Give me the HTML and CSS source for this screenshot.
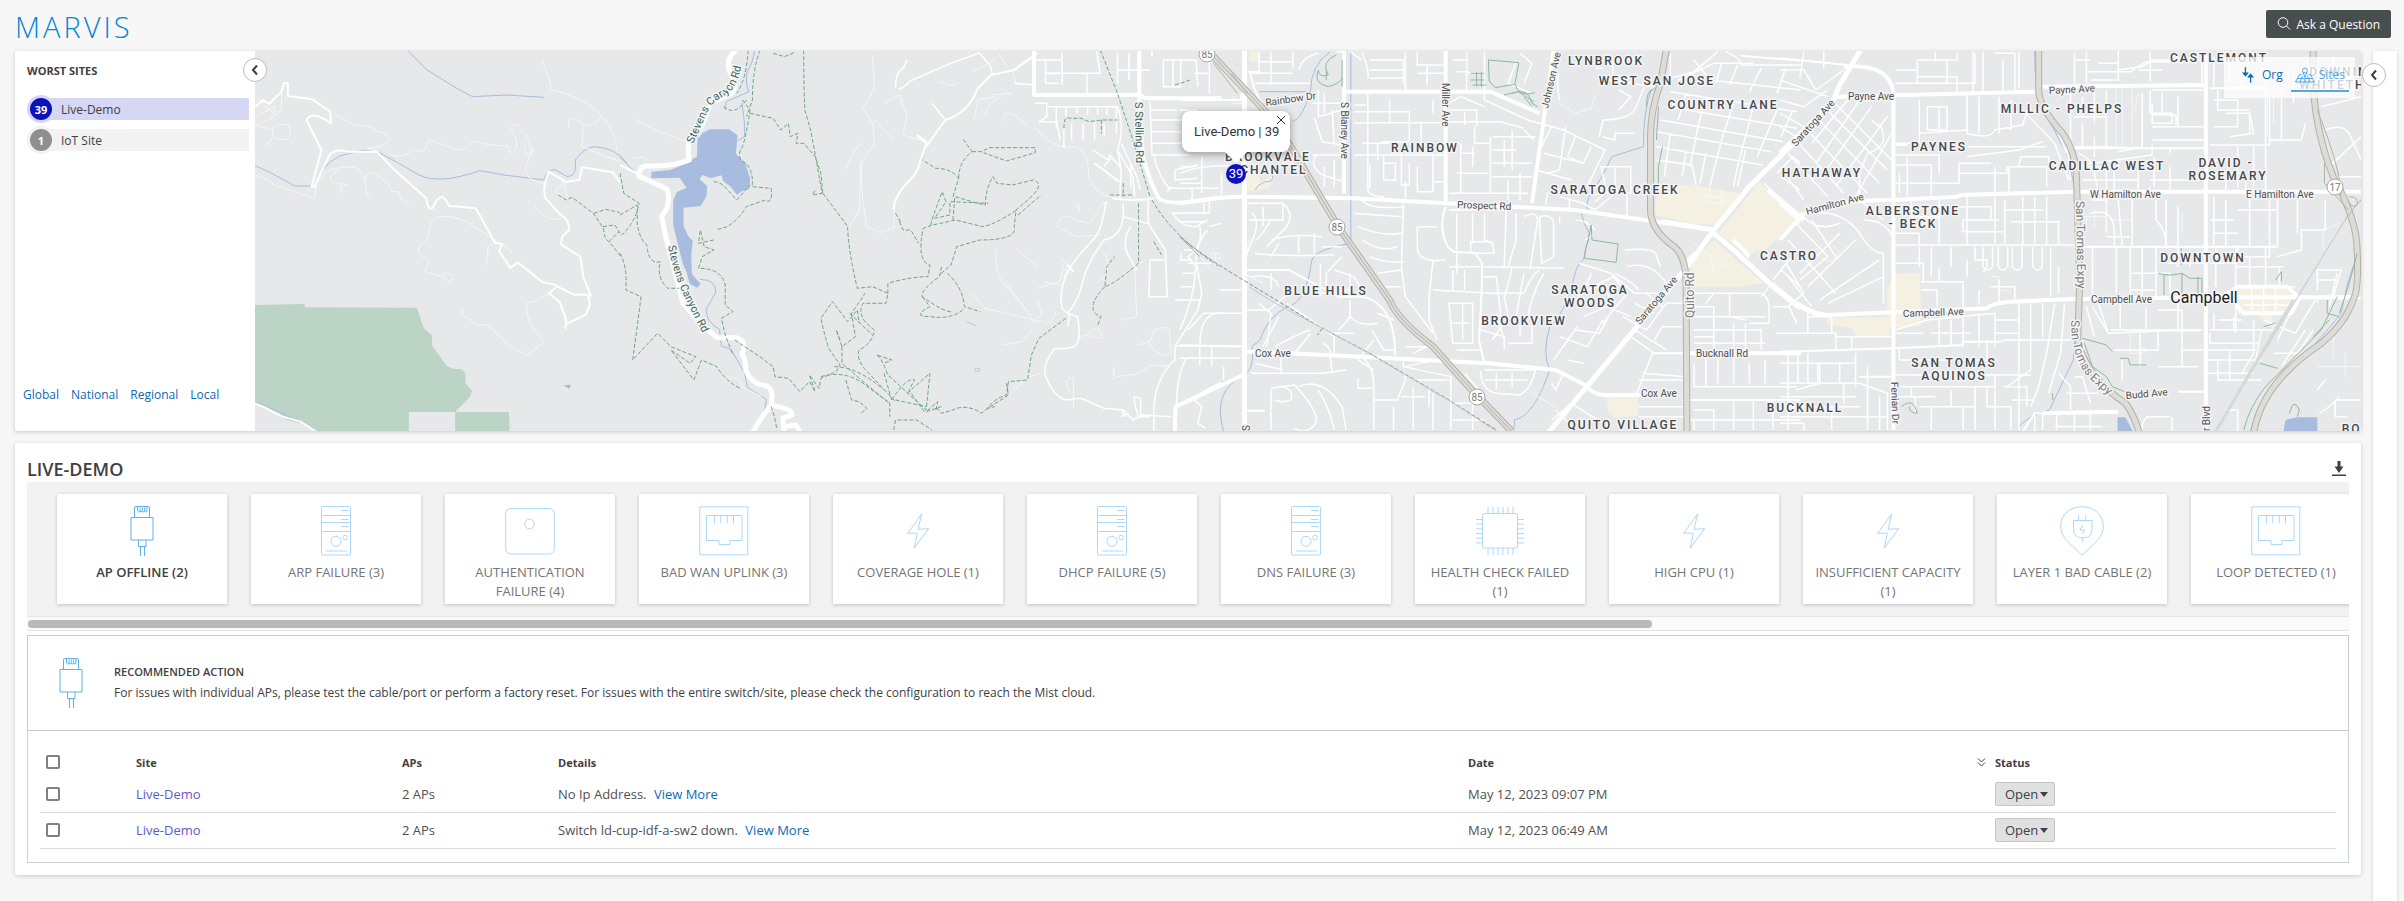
FILE: index.html
```html
<!DOCTYPE html>
<html lang="en">
<head>
    <meta charset="UTF-8">
    <meta name="viewport" content="width=device-width, initial-scale=1.0">
    <title>Marvis Actions</title>
    <link rel="stylesheet" href="styles.css">
</head>
<body>
    <!-- Shared icons -->
    <svg class="icon-defs" aria-hidden="true">
        <symbol id="icon-plug" viewBox="0 0 50 50">
            <path d="M14 11.5h22v22.5h-22zM17.5 11V2q0-1.500 1.500-1.500h12q1.500 0 1.500 1.500v9M20.500 1v4q1.300 2.500 2.500 0v-3.500M23 5q1.200 2.500 2.300 0V1.500M25.300 5q1.200 2.500 2.300 0V1.500M27.600 5q1.200 2.500 2.300 0V1M21.500 34v6.500h7.500V34M23.500 40.500V50M27.500 40.500V50"/>
        </symbol>
        <symbol id="icon-server" viewBox="0 0 50 50">
            <rect x="10.500" y=".5" width="29" height="48.500" rx="1"/>
            <path d="M10.500 9.500h29M10.500 16.500h29M10.500 25.500h29M30 4.500h7.500M30 13.500h7.500M30 20.500h7.500M15 45h21"/>
            <circle cx="25" cy="35.300" r="5"/>
            <circle cx="34" cy="31.500" r="2.300"/>
        </symbol>
        <symbol id="icon-ap" viewBox="0 0 50 50">
            <rect x=".7" y="2.500" width="48.600" height="45.500" rx="5"/>
            <circle cx="24.500" cy="18" r="4.800"/>
        </symbol>
        <symbol id="icon-port" viewBox="0 0 50 50">
            <path d="M.8.8h48v48H.8zM7.500 9.500h35.500v25H31v4H20v-4H7.500zM15.500 9.500v8M21.800 9.500v8M28.200 9.500v8M34.500 9.500v8"/>
        </symbol>
        <symbol id="icon-bolt" viewBox="0 0 50 50">
            <path d="M28.700 8L25 23.300l10.700-.6L21.300 42l3-15-9.600.3z"/>
        </symbol>
        <symbol id="icon-chip" viewBox="0 0 50 50">
            <rect x="7.500" y="7.500" width="35" height="34.500" rx="2"/>
            <path d="M13 1v6M18 1v6M23 1v6M28 1v6M33 1v6M38 1v6M13 42v7M18 42v7M23 42v7M28 42v7M33 42v7M38 42v7M1 13.500h6M1 18.200h6M1 22.900h6M1 27.500h6M1 32.200h6M1 36.900h6M43 13.500h6M43 18.200h6M43 22.900h6M43 27.500h6M43 32.200h6M43 36.900h6"/>
        </symbol>
        <symbol id="icon-cable" viewBox="0 0 50 50">
            <path d="M25 .7C13 .7 3.700 9 3.700 19.500 3.700 31 10 35 25 49 40 35 46.300 31 46.300 19.500 46.300 9 37 .7 25 .7zM16.500 14.500h18.500v8.500q0 9-9.200 9t-9.300-9zM21.700 9v5.500M28.700 9v5.500M25.700 32v4M25.500 19.500l-2.500 4.500h4.500l-2 4"/>
        </symbol>
        <symbol id="icon-chevron" viewBox="0 0 10 12">
            <path d="M7 1.500L3 6l4 4.500"/>
        </symbol>
    </svg>

    <header class="page-header">
        <h1>MARVIS</h1>
        <button type="button" class="ask-button">
            <svg viewBox="0 0 14 14" width="14" height="14"><circle cx="6" cy="5.500" r="4.800"/><path d="M9.500 9l3.500 3.500"/></svg>
            Ask a Question
        </button>
    </header>

    <div class="layout">
        <main class="content">
            <section class="panel site-panel">
                <aside class="worst-sites">
                    <h2>WORST SITES</h2>
                    <ul>
                        <li class="site selected"><span class="count">39</span>Live-Demo</li>
                        <li class="site"><span class="count">1</span>IoT Site</li>
                    </ul>
                    <nav class="zoom-links">
                        <a href="#">Global</a>
                        <a href="#">National</a>
                        <a href="#">Regional</a>
                        <a href="#">Local</a>
                    </nav>
                    <button type="button" class="collapse-button sidebar-toggle" aria-label="Collapse sites"><svg><use href="#icon-chevron"/></svg></button>
                </aside>

                <div class="map">
                    <svg class="map-canvas" viewBox="255 51 2106 380" preserveAspectRatio="xMidYMid slice">
                        <!-- West hills -->
                        <g transform="scale(.3954 .3333)">
                            <path class="park" d="M640 915L770 912l1 10 283 1 18 62 20 20 1 32 37 61 18 9h19l10 13v30l17 22-6 20-37 44h136l2 60h-138v-60h-117v60H798l-33-25-37-10-28-20-60-43z"/>
                            <path class="creek" d="M1030 150l50 60 75 55 40 25 85-5 95 7M640 495q40 18 105 63h45M805 532q25-62 85-74 30-13 65-3 55 35 105 70 50 30 153-13l62 13 100 15q10-35 30-30l30 20q25 0 20-50 25-40 50-40 55 5 80 50M645 1205l60 30 40 25"/>
                            <path class="water" d="M1424 1156l20-2-4 12z"/>
                            <path class="road thin" d="M712 280v50l-30 30 15-40-45 25M655 300l40 45M645 380l30-20M645 375l45 15v25l-20 25M690 390q0-25 40-15 10 20-5 45l-30-5M845 340l50 35q50 0 60 20 20 0 30 20-10 30-60 30l30 10M985 460q15 15 40 5l20-15 25 5 15-35 50 20q20 15 45 5 15-30 35-15l70 10q5 30 15 15 15-30-5-60-5-30 20-20M1315 388q25 20 25 50 20 20-5 22-15 0-5-22M1345 445q-5 30-15 55-5 40 40 48l15 5M1370 180q20 50 25 90 80 20 120 70 45 50 45 110M1440 385q-10-30 15-30l25 22 25-5 15-25M1475 380l-3 60q60 30 96 45M645 525q30 10 50 30l60 25 40 15 5-40M805 545q20-40 50-40 50-15 60 15 10 20 12 60l15 8M922 540q5-30 25-20l35 30 10 25 15 0 10 25 20 10M855 510q-30 25-15 35l40 10M860 550l5 30M1260 730q-40-35-80-65-40-20-75-15-20 10-22 65-50 40 2 65l-10 35 42 15q10-20 30 0l-7 18-23-18M1235 740l-5 55M1240 735l25-8 30 30M1388 880l-38 25-18 5q-2 40 18 80 30 30 22 40l-39 36-43-26-55-65h-35l-10-15-22-15v-18M1352 618q10 30 50 40h20M1425 550l-20 20 15 20M1425 545l10 50"/>
                            <path class="road mid" d="M640 325l25-25 15 12 32-37 6-25h10v38l62 10 45 37 3 35q-50-40-63-10l38 90-25 110h7l38-95q15-20 45-10h75l45 55 80 85q5 40 17 28 20-60 40-6l68 8 17 35 32 68 18 5-8 20 28 50 20-15 62 58 30 8q30 20 50 30h35l5 30-10 30-50 28-2-18M1495 890l-20-60-7-60-48-35q-5-25 20-45-2-35-22-45l-38-50q-10-30 8-80l42 30 35-5 7-38 78 15 18 30M1410 858l-22 22 27 25 17 55-2 27M640 1210l25 10 50 30 45 15 50 38"/>
                            <path class="trail" d="M1412 585l20 15 15-8 55 50 25 45q0 30 15 40l30 45M1502 640l30-12 36 10M1525 680l30-5 13 25M1540 725l25-30"/>
                        </g>

                        <!-- Stevens Creek -->
                        <g transform="translate(620 40) scale(.3827 .3333)">
                            <path class="water" d="M205 340q-5-40 10-60l20-12h50l22 18-4 55 25 30 12 45-2 30-20 8-12 10-18-25-18-15-5-18-28 9-22-10-7 13 20 20-2 30-15 30-45 5v55l12 30 12 15-4 45 2 55 22 28-8 12-20-12-8-35-10-25-25-115v-75l10-25 25-13-18-30-75 2 2-20 48-5 22-10 48-30 2-60 10 5z"/>
                            <path class="creek" d="M352 30q-5 40-20 65-5 40 5 60l-60 30-2 25M318 190q10 60 7 100l-18 12M0 350l42 50M208 718q45 0 42 40l-25 50q0 40 35 60l5 50 25 10 35 70 8 45 50 35-10 60"/>
                            <path class="road thin" d="M35 238l70 38 70 30M38 355q30-10 30 10M660 45l5 100-30 60 25 45 5 60-35 60-5 140-30 60M590 390q25-70 40-80M665 240l50 60M690 190l40-25 20 60-10 60 45 15M630 360q0 70 5 130l10 70 35 18 35-15 2-50M835 125q40 20 45 5M920 95l60-35M970 165l55-5M925 240l10-60 45-10M950 230l20-40 30-25M1008 250q-20-50 30-20l25 25M990 40l20 40M1085 40l-60 50 10 40 50 5M1085 260q40 70 100 60 40 5 40 90 20 60 60 60M985 630q-10 40 10 90l60 80 30 50M1010 730l50 80M1090 745l60-20 10-50M1040 630l50 50M950 805l60 15 90 25M920 760l35 45M1150 655l20 20-15 60-50-10M1190 540q-40-30-45 20l45 30 65-5M1190 540l35 10M1200 510q-20-25 0-15v20M1230 550l30-60h15M1000 915l50-10 30-40M1075 850q30-20 25-40l-10-30M1105 840q20 30 35-30M1200 890l20-5q30-40 40 0 0 20-40 0M1310 840l40-10-5-150 30-20M1350 915q30-5 40-20 0-40 45-30l5 80-20 0q-50-20-30-60M1290 1020v-40M1295 1010l60-8 30-25 50 0M1175 1060q-20-50 10-45v60l0 30M1270 640q10 60-10 80M1030 1050l40-40 30-10M275 1020q40-20 45 20l50 30"/>
                            <path class="road" d="M720 145q0-50 20-60l10-25M728 148q20-10 30-25l110-55 50-20 20-10 30 40 5 25M775 285l28 20M850 240l-35-50M1085 135l-55-5M1155 40v95M1085 60h70M1112 60v70h35M1155 100h65v60M1245 30l10 70M1255 100h-35M1300 40v90M1300 90h55M1330 40v80M1355 90h30M1390 30v20M1420 140V60h45v80zM1445 60v80M1465 60h40l5 80M1500 100h35M1540 50v110M1085 190h30v40l-20 15h50M1117 200h180v80M1140 200v60M1165 200v30M1195 200v20M1222 205v20M1248 205v20M1272 205v20M1180 250v50M1210 250v50M1240 245v55M1265 250v40M1160 265v60M1140 240l10 60M1300 200q20 60 0 130l10 60-5 90M1235 330l40 30 5-15 30 40M1285 350l-20 30M1310 310l40 100 10 40M1300 330l40 80 5 60M1335 370v70M1385 185l5 160M1385 210h70M1390 240h90M1390 275h80M1390 310h90M1390 345h100M1395 345q10 60 40 100h130M1450 390l60-15M1450 390v30l60-5M1495 445v40M1440 520h100v-40M1445 520q20 40 60 40l30-20M1540 560l30-10M1535 570q-30 40-30 90l15 100-10 50-60 110v40q-60 60-55 180v40M1380 480v70l45 80 5 140h-48l3-110h40M1450 780h65M1465 640v20h30M1470 700h30M1465 740h35M1450 918h120M1515 918q0-100 55-100M1515 918v60M1560 955h-80q-30 60-25 170M1500 1080l20 20-10 50 20 15M1385 1130l-30 0q-15-50-10-60l15 5v60M1270 485q-10 80-30 110-50 60-65 90-30 60-20 120l20 20-5 35M1315 490v40q-5 60-50 70-40 60-55 120-10 60-40 100l25 10q10 50 0 80-10 20-60 15-30 50-25 75 20 70 55 80l40-5 60 30 50 5 25 30 25-15 75 5M1315 530l60 20h10M1335 560q-30 50 0 100l15 30M1440 440l-10 15M1320 1130l-10-20M1310 1130l20-10"/>
                            <path class="road major" d="M1082 30v135h275V30M1357 163l15 12h200M1357 163q0 60 10 190 20 80 40 120 20 30 160 0M1450 1180q0-60 2-80 60-30 120-70"/>
                            <path class="road wide" d="M303 30q-30 30-15 70 20 30 5 60l-55 30-25 70-32 40q-5 30 0 60-40 20-110 18-20 0-22 30l75 40q10 50-15 80l10 60 45 200q40 60 90 105h50q30 10 15 50 10 10 10 50 15 40 55 45 20 10 10 60-30 40-50 85M390 1095q60 10 60 30l-25 10 5 45M430 1160l30-5 10 20"/>
                            <path class="road mid" d="M775 285l25 25-15 50q-5 40-40 75-30 40-30 75M800 320l50-80q60-20 85-95l35-40 60-15 60-50M1240 370l65 55M1285 475q60 10 110 0M0 375l50 28M1185 695l-15-20M1110 100h40"/>
                            <path class="trail" d="M335 30q-5 90-30 130M366 30q-20 60-20 150l-15 50M270 200q30 30 60-20M320 180l20 30q-15 110-25 120-10 30 15 40 20 30 15 70l50 5q5 50-15 35l-50 20q-20 40-50 60l-30 10M340 220l60 15 20 35 20-20 5 40 20-10-5 30 20 0 30 40 15 50 5 60M480 30q0 100 3 180l15 60 10 60 20 130-25 5 10-20M530 460q40 60 65 100 0 60 25 185l40-5 40 20-5 30-60 0q-20 40 30 80-5 40-40 60-10 30 25 70l70 85M245 425q20 0 40 30l20 25 35-45M245 600l-40 10 5-40 10 50 25 10-30 20-10 35q60 0 70 50v60l20 20-30 20 10 50 20 60M400 40l30 10 25-12M0 400l10 60 40 30q-10 60-50 100M0 525l45-30v60q10 50 25 60 5 60 35 50-10 50 20 80h30M0 640q20 40 15 110l40 20-10 90-12 100 65-80 35 40 65 30-15 20-50-40 60 90 20-60 40 20q20 40 60 65M300 900l65 50 35 30 5 30 35 5 30 40 25-30 15 30-15-50 25 40 5-30 40-20 10-20-30-50q-15-60-20-90l30-50 40 60 25-35 5 40M575 900l-10-30 15 50 35-30-10-70 30-50 5-10M600 820l60 65M395 1100q10 30 15 70M525 1010q60-20 110 20l70 60M560 980q60 0 130 70M580 920v50q80 80 125 120v40M590 1020l15 60 20 5 20 20-15 15M715 1170l5-30 55 0 40 30M710 1080q40-70 60-60l-15 30 40 65M720 1080l80 20M750 1060l60-60-10 110-100-105q-20-60-30-60l40 15-20 10M690 1000l20 80M840 1100l-40 15 30-30-5 30M700 760v-30q60-20 105-20l5-35q-35-10-18-110l25-10 60-15 70 20q30-5 90-50M812 555q0-10 30-100l10 30-30 50 40-10v-40l100 5M870 540l5-70 60 20 20 5q0-50 20-85l10 20 40 5 55-15q30 10-5 50l-40 40-5 50q10 40-90 40l-60 20-15 55-30 30M870 470l15-55q-20-30-60-30l-35-25M885 415q0-50 35-80l-25-40M920 335l25 0 20-12h120v15l-75 25-60-25M730 545l10 25 20 0 20 40M720 520l15 30M1040 525l60-60M840 680l-5 30q-50 40-45 60 60 50 80 45M855 700q40 40 45 100l40 15M790 770l20 30q-50 30 0 30 60 10 90-25M1165 835l-70 60-20 50-10 75-50 5-5 40q-30 10-50 40l20-5M1160 265q0-40 15-30l30 0 20 10 35-5 40 0M1258 240v40M1255 30l45 130 40 140 45 170M1280 465l60 0M1315 430v40M1390 480q40 80 115 150l60 50M1355 490v180q-60 60-88 70l5-60 20-30M1267 740q-50 60-20 85l10 5-10 30M1395 605l20 40M1450 135l40-15"/>
                            <path class="trail dark" d="M1010 1030l5 35-60 45-10 10q-40-30-75-10l-30 10-15-20"/>
                            <path class="rail" d="M905 845l25 12M928 985h12v8h-12z"/>
                        </g>

                        <!-- Cupertino to Saratoga -->
                        <g transform="translate(1180 40) scale(.3954 .3333)">
                            <path class="downtown" d="M1210 438l90-3 115 25 5 25-68 70-60-5-92-25zM1466 425l95 105-75 95q-40 20-55 15l-70-60zM1350 600l125 130-60 10h-122v-70zM1078 1070l80-2v60l-60 5-15-15zM175 35h22v30h-22zM170 350l15 15 20 60 30-20-10 40-55 10z"/>
                            <path class="creek" d="M380 35q-50 40-50 120h-130M330 155q-20 80-45 90M432 30v580q-100 20-100 60-15 120-60 130-50 30-70 100l-20 20q10 80-40 100-60 50-30 160M235 405q0 25-20 20-20 10-25 25M1222 40q5 100-30 110-20 60-20 170l-80 30q-30 80-50 100-20 50-10 60M1015 520q5 30 20 60l-15 80q-20 10-30 90-30 90-55 110-20 80 0 130-40 140-90 150 10 30-30 50"/>
                            <path class="road thin" d="M165 190l-30 0v-20M80 640h20v15h-20zM50 650l30 40M90 640v40M160 700l50 30M170 650q0-50 10-60M960 190l40 30 40-15 10-40M1310 455l90 35M1320 470h60M1330 490h50M1340 440v50M1370 450v60M1300 610l90 80M1320 690l80-20M1340 640l10 60M890 1060l60 40"/>
                            <path class="road" d="M0 210h45M0 240h50M0 275h50M0 310h40M0 380h40M0 400q60-30 160-20M55 350v110M105 400v70M0 430h55M0 520h60v-30M0 545h60M50 560q10 60-30 90l20 30-5 60q-10 60-35 130M10 630h30M20 670h60M100 750h55M20 870l40-50h100M0 918h160M80 920v60M0 955h150M110 980v40M200 35v60h-30M198 65h90M230 35v100M175 100h110M190 130h140M285 35v50M300 90q10-40 50-50M395 35h20v45M350 150v80l60-20M335 190h75M365 160v60M340 235l20 70 50 10M385 210l5 100M335 345h80M345 345q-20 30 15 60l55 20M365 380v60M390 360v80M430 35l30 25M480 60h85v70M480 90h90M480 115h90M460 35q20 60 15 80M570 35v120M600 35v40h70M600 100h70M625 75v60M700 95h30M725 35v120M725 100h45M770 35l0 120M690 60h40M850 65l-20 65 60 30M860 40l30 30-20 60M475 155v290q0 25 40 25v10M440 195h30M440 215h140v90h-70M440 248h235M530 180v70M500 310v50M460 310h70M440 345h230M480 375v70M515 345v75h30l0-50h-30M560 345v90h20v-65M600 380v75h40v-60M570 425v50M640 345v80h30M610 250v60l40 10M640 180v40M680 190l30-20 60 30M680 210h70v50M720 215v40M680 245h130l60 20M785 290v170M745 260v50h40M840 270v120M790 290h110M790 330h60M790 370h100M710 310v150h60M700 400h80M740 320v60M715 340h30M790 410h100M820 300v80M870 270l25 30M680 460h200M830 420v60M860 400v80M770 155v25l110 60 90 30 105 60-45 110M940 260l-25 60M1000 290l-20 60 40 20M920 340l100 30 20-50M975 260l-15 130-30 10M900 390l90 30M1065 380h75v80h-60zM1100 385v70M1060 290l10-50q60 0 80-30l35-100M1070 290l30 10v-20h50M1110 150l30 20-30 40M1080 120h40M1095 60v60l100 20M960 180q-10-60 0-80M1050 85h20M1380 35q40 20 40 40h150M1240 45v70l60-20 60-60M1260 120l90-50h100M1300 60l40 60 230 30M1370 70l-15 60M1410 75l-20 60M1470 85l-30 70M1530 90l-20 70M1240 155l320 60M1230 200l330 65M1215 240l310 65M1205 275l290 60M1205 320l270 55M1205 360l90 15 10 60M1280 160l-20 80M1330 170l-20 90-20 120M1400 190l-30 110-20 90-10 50M1450 200l-40 180-10 60M1510 210l-50 140M1550 210l-30 80M1280 330l-10 80M1330 340l-15 90M1430 330l-20 110M1240 280l-15 130M1000 450q50 30 90-5M960 470l60 20 30 20M1050 510l60-60M1080 455l-30 30M1130 460v70M985 480v30M930 455l-5 40M170 490l90 0v50h-85M210 500v60M260 490q30 30 10 70l-50 60M230 540q-30 60-40 60M180 520q20 10 10 60l-20 60M230 600q50-20 130-10M190 640q60 10 200 5M340 580v60M300 590v50M250 610l-20 40M360 620h50M410 650l-40 50 0 50 60 0M355 670v100M180 710q60-10 70 30M230 700v50M330 760h60M390 690l50 20 30 60M430 700v60M460 480q20 30 110 20M440 520l120 10M450 560q60 30 110 20M460 600q50 40 90 20M480 650q40 20 85 15M565 490l-5 190 10 90 70 110M500 700l60-10M520 740h40M600 560v60q0 50 70 40M600 560h50M680 510h160M700 520v110M740 520v90M770 520v80l20 10 5 30h-60l0-35 55 0M825 510l-5 170M870 530q30-20 35 10l-20 150M850 520v80l-20 80M910 530q30-10 35 20v100l-30 20-5-100zM960 530v20M680 680h90M760 680l210 5M700 640v60M640 660l-10 110v70l20 60M640 750l150 10M690 690v60M720 690v60M680 790h60v120h-50zM715 790v110M690 850h40M760 710h40l10 100 0 60M840 680q-10 60-20 90l10 60-40 70M790 760h80q20-60 40-70M870 700l-20 130M920 700q-30 60-40 130M760 870l60 20 0 40M800 820l20 80M830 910l60 0v-60M860 830v60M1000 540q30 0 50 30M1025 600l20-15M1125 630q80-10 80 20l10 30M1130 680q60-20 100 50M1100 700q50 30 60 50M1010 670l80 30 60 60 60 0M1040 700l-20 60M990 790q40-50 110-80M1060 730l40 60M1090 700l40 60-60 90M1020 830l60-30 60 30M1000 870l60 10 20-40M960 890l70 30 40-80M945 960l60-100M980 960l40 10M970 1000l-20 50-10-20M1150 790l50 30M1120 830l60 40M1180 760l40 40M1140 890l60 50h80M1195 940l-40 120M1170 1000l110 10M1160 1020h115M1160 1100h120M1150 870l80 60M1180 870l50-80 50 0M1200 900l20-40h50M1220 1170v-40M1160 1130h120M950 1110l50 60M990 1090l80 60M1000 1080l-60 60M165 810h60l70-70M200 790l30 30-10 100M270 790l120 100v50M250 830l-40 90M240 920q60-40 90-50M330 880l-40 60M390 880h50M380 940q0-20-20-30M430 780v50q20 30 70 20M430 830q-10 20-30 40M490 900l-40 60M500 820l40 20M485 870l30 60 30 0M255 950v50M180 1000h180l60-10M190 970l70 20M380 950l5 50M460 950q30 30 30 90v130M450 960l40 30M490 1045h-40v-30M230 1050v120M230 1045l60-10q70 90 50 120-20 30-50 10M240 1080q20 10 40 0 10-30-20-40M300 1040q60-30 110 60l10 70M350 1050q30 60 40 120M490 1080h60l20-60 0-20M565 960v20l120 30v160M560 1070h60M540 1100v70M590 1040v130M630 1040v60M570 980l60-15M600 1020h80M640 1060v110M690 1090h50v80M690 1140h80M760 990q0 60 40 70l60 5q30-20 40-80M770 990h130M800 1000v50M840 1000v40M770 1020h110M570 920h60l30 20M590 940l40-25M700 930l60 0M720 1000l50 70M1300 760l170 0q20 10 20 50v40h-50M1290 800h60v60M1330 790l20-30M1390 760v70l40 10M1300 830h180M1300 870h170v60M1350 850v100M1400 850v90M1430 850v90M1300 890h50M1500 800h40l20 50M1300 910h180M1300 970v70h260M1330 940v100M1360 940v90M1400 940v90M1440 970v60M1480 960v70M1290 1080h280M1300 1110h50v60M1290 1140h280M1300 1170v-30M1400 1080v90M1450 1080v90M1500 1080v90M1560 630l-60 90M1520 690l48 50M1568 550l-90-120M1490 740l-20 30M1520 410l48 40M1510 400l40-50 18 20"/>
                            <path class="road mid" d="M0 180h155v-20M165 690h110l125 80h60q85 20 84 175M0 915l150 5M165 1112h50M178 100q10 60 30 90M672 500q-20 60 5 120l15 15 55 5 17 30q0 100-8 230l14 70M1568 62l-150-15M1270 1080h290M1195 940h90l285 0M370 945l190 10"/>
                            <path class="road major" d="M415 30v430M672 30v465M945 30l-55 460M420 155h365l125 65M0 490q90-20 160-20l280 5 560 35 350 60M160 935q10 0 40 0l580 35 170 20 75 45q20 30 50 30l90 0M1350 575l-40 60-30 30M0 1095l160-90M1440 650l-40-50M1285 940h285M1568 805l-70-65"/>
                            <path class="road wide" d="M163 30v1150M930 1180L1290 670l60-100 90-130L1568 290M1345 575l60 60 90 100 70 65M1220 545l130 25"/>
                            <path class="highway-edge" d="M1230 30l-15 100q-25 80-25 160v220q0 60 60 110 30 30 30 110l2 450M85 50l120 150q60 80 105 180l90 180 130 220q20 60 110 140l90 120 110 135"/>
                            <path class="highway" d="M1230 30l-15 100q-25 80-25 160v220q0 60 60 110 30 30 30 110l2 450M85 50l120 150q60 80 105 180l90 180 130 220q20 60 110 140l90 120 110 135"/>
                            <path class="highway-line" d="M85 50l120 150q60 80 105 180l90 180 130 220q20 60 110 140l90 120 110 135M85 70l60 90M130 100l40 60"/>
                            <path class="trail solid" d="M780 60l77 8-10 65-50 10-15-20zM735 100h35M735 120h35M740 135h35M750 95v45M762 95v45M847 133q10 40 50 25M840 160q40-20 50 30l15 10M820 165l35-10 40 30M870 170l20 30M395 45q-40 20-20 60-25 10-25-15-15 40 25 50 30-10 35-25M370 90v30M410 60v80M1040 555l2 45 66 12-5 55-80-12q0-30 10-55zM1210 440v-60l10-60M1180 200q0-50 15-50M1205 300l5-100M0 590l50 60"/>
                            <path class="trail dark" d="M0 590q60 60 160 130l200 145 120 75 200 140 120 90M360 865l-12 20"/>
                            <path class="rail" d="M175 740q60 50 170 115l140 90 200 140 130 100"/>
                        </g>

                        <!-- Campbell -->
                        <g transform="translate(1780) scale(.398 .3333)">
                            <path class="downtown" d="M-30 580l70 80-40 60-30-10zM288 822l62-3 5 120-5 40-75 5v25l-85-2-10-25-60-5-2-25h150v-80zM1150 868h130l15 40-10 30-50 10 10 45-45-50h-50z"/>
                            <path class="water" d="M848 1252l20 0 20 45h-40zM1270 1260l30-8h50v45h-85z"/>
                            <path class="creek" d="M640 150q-5 120 40 220l40 90 22 110 10 60-5 300-10 150-60 150q-60 20-80 55M1450 770q-25 70-40 170-40 60-110 150-100 120-120 210"/>
                            <path class="road thin" d="M845 270v170M860 270v170M885 270v160M900 280l-10 60M760 620v30h60M770 650v30M790 620v60M830 660h55v-50M1010 640v60M1365 750v-60l40-20M1390 1010v70M1350 1100h110M1420 1060v70M905 1045h12v12h-12zM880 1000v60h30M530 830h20v40l30 5M80 760l40-40 30 40-25 25zM1225 190v220M1240 270v100"/>
                            <path class="road" d="M0 210h60l30 60 70-60M60 155l-10 80M110 155v50M0 240l120 50M0 300l60 20 60-50M130 300l150 180M110 320l160 190M90 350l160 200M60 380l160 200M40 420l120 160M20 460l100 130M170 300l-90 130M200 300l-110 190M230 320l-120 200M270 350l-130 210M280 400l-90 190M0 340l60 40M0 380l40 30M0 500l60 100M250 370q30 70-30 90l-20 60v80l60 60M230 360l20 20M290 210h55v40h145v-90M345 210v-30h100v-20M345 230h100v50M390 155v30M420 180v70M290 250h60M485 150v130M510 155v120M540 160h50v110M560 180v90M600 155v110M290 430h60v-30l120-10v-110M350 400v-100M370 320h50v70h-50zM400 320v70M470 290v110q60 20 70-10l70-15 15-60M500 290v110M550 290v110M580 300v90M470 440h200M470 470l130-20 60-25M605 470h70v30h-75zM650 310l70 120 10 110M680 340l40 120M610 330l80 100 35 110M290 465h110v55M290 495h90v90M320 470v120M350 550h100v-60h80M450 520h120v-20h100v60M290 550h70M300 520v60M540 500v80M575 500v80M330 600v50h70v-50M400 600v130M470 590v145M450 620h80v40h-70v35M540 590v140M500 660h50M610 590v150M565 600v130M640 590v140M670 590v145M560 630h100M580 665h120v70M460 695h100M290 735h450M350 740v60M290 790h70v60M380 740v90M430 740v60M490 740v40h30v20q-15 20-5 12M470 780l0 50M510 740v60q12 20 24 0v-60M548 740v60q12 20 24 0v-60M584 740v60q12 20 24 0v-60M635 740v60q12 20 24 0v-60M355 845h105v85M355 870h40v50M400 845v-40M530 860h60v40M550 840v70M500 870v40M680 740v150M700 800v80M290 700h60v35M210 660q60 0 75 60M60 640l60 0q50 10 80 60 30 60 60 60v150M50 640q40 60 100 30M40 670l80 100-70 70M80 660l60 110M20 720l120 160M0 760l60 120-40 40M100 900l150-120M70 860l120-140M50 820l100-120M120 910l140-80M20 830l60 90M-10 1000h80v-80M60 1000h80v50M140 1010h150M70 950h60v50M180 1010v40M290 1000h70M0 1090h190v-30M100 1090v60l-60 20M20 1050v240M45 1050v100M70 1060v90M95 1090v60M150 1090v60M190 1060v100M0 1150h200M0 1190h190M0 1220h200M200 1130h80M220 1100v190M200 1150l70 30v110M0 1250h270M130 1220v70M160 1150v60M250 1190v100M0 1270h60v30M290 990l80-30 170-20v100M400 960v80M430 960v80M460 950v90M380 1000h100M500 940v100M540 1000h60v-90M600 910v380M630 910v200l-60 50M660 910v100M690 910l-20 150-20 100-20 60M715 910l-10 150-30 120M560 1020h170M540 960h60M300 1040v40M300 1080h220v-60M290 1125h340M300 1160h240v-20M540 1125v165M330 1160v30h60M290 1190h50v50M350 1220h140v70M380 1220v70M430 1170v50M460 1220v70M490 1160v130M520 1160v60h60v70M560 1160h60v60M580 1200h60M740 160v100M740 180h40M770 155v60h110l40-30h120M780 240h70v-30l60-10 20-15M770 215v50M850 150v60M800 190h50M930 155v90M900 210h60M930 180h130M1060 155v100M1090 170v90M1130 180v70M1160 200v60h60M1220 200v60M730 270v170h90l90 5M760 290l0 60h60v90M790 270v100M740 350h50M760 370v70M790 410v60M820 270v140M910 280v160l-60 15M930 270v70h55v30h-50v-60M960 280v60M935 345h60v30M935 380h130M935 420h130M935 435v30l-120 20-60 10M980 440v20M1000 290v90M935 270h130M1100 270v60h80M1090 300h60v80h-60M1120 340h60l10 60-60 10M1180 340v60M1080 435h150v-165M1220 270v300M1150 440v120M1190 440v120M1080 480h60M1090 520h80v50M1120 540v40M1230 420h80l10-50M1260 270v150M1290 200v110M1370 390q40-20 60 10l30 80M1380 500l80-90M1400 530h60M1360 320l100-30M1350 270l110-5M1390 170v60h70M750 460q40 20 40 60l10 60M760 500h60v70M840 500v70M900 500v70M940 470v90M760 540h140M930 540h130M980 500v70M930 560v20M780 600h40v60M780 640q60-20 60 60v40M820 600v100M850 600l10 140M885 600v140M945 600v60q25 30 25 80M970 600v140M1000 620v120M820 710h60M750 740h500v-140M1090 590v150M1120 600v140M1150 630h100M1180 600v140M1230 600v170h-80v-35M1300 600v100M1370 600v90h-60v60l-60 20M1090 700h60M1080 660h60M785 740v140M845 740v140M880 740v160M910 740v150M945 740v150M880 820h100v60M975 790h90M1000 740v60M1030 750v50M1095 740v120M1145 740v120M1180 770v90M1220 740v120M1145 800h120M1080 790h70M1255 800v60h40M880 870h60M1000 900v90M920 920v70M950 930h60v60M770 920l20 90M785 920l40 80 150-8h80M800 910l25 90M855 910v80h80M830 990h230M840 1050h110v-60M905 1000v100M1010 990v110M1010 1050h55M950 1100h100M860 1140v-60M1080 990h160M1090 940v50h50v-40M1145 910v90M1100 960h60M1075 1050h120M1070 1080h140M1100 1080v60h110M1130 1050v90M1190 960v100l-30 60M1070 1120h120M1080 1000v30h120M1210 990l-20 120M1235 1010l60-100M1250 1020l40-100M1240 1060h60l40-70M1260 1100l60-110M1215 960l80 40 50-100M1350 870v-60h60l-20 80h-40v20M1400 820l-20 100M1350 840h50M1165 890h130M1165 915h120M1185 865v80M1215 865v75M1245 865v75M1170 940h110M640 1240v60M700 1120l30 40v70M740 1130h20l20 80M720 1180h80M660 1240v50M695 1240v50M740 1235v60M780 1240v50M690 1280h120M930 1250q-20 0-20 40M985 1250v50M920 1250h60M1120 1230h30v70M1400 1200h60M1395 1200v50h30M1350 1170l20-30M1355 1240q30-20 50-50"/>
                            <path class="road mid" d="M0 1055l290-10 170-10 0-10h100M740 740l510 0M290 435h30M750 1240h-110l-30 55M200 1130h90M1000 1175h65M1080 265l140 0M0 175l170 20M1300 895h160M735 445h330"/>
                            <path class="road major" d="M160 200q125-10 125 90v1000M140 290l500-15M660 260l405-5M1070 155v1145M65 640q60-40 220-40l160-10 10-5 290-10h720M0 870q60 70 120 75l400-20q10-15 60-20l160-8 380-5h330M1145 860h130l30 35-20 45h-120q-35-40-20-75l-25 20M660 1240l190-5M0 720l60-80M0 610l50 50"/>
                            <path class="road wide" d="M0 460l130-150 20-55 55-110M-30 570l90 90M-20 850q40 60 120 95"/>
                            <path class="highway-edge" d="M650 150v120q0 50 60 130 35 60 35 140l8 310-5 170q20 110 120 190 20 30 35 90M1340 150q-10 200 50 380 60 130 60 220 5 120-10 150-20 70-80 130-150 120-170 270"/>
                            <path class="highway" d="M650 150v120q0 50 60 130 35 60 35 140l8 310-5 170q20 110 120 190 20 30 35 90M1340 150q-10 200 50 380 60 130 60 220 5 120-10 150-20 70-80 130-150 120-170 270"/>
                            <path class="highway-line" d="M1368 490v60l60 80M1350 330q60 180 60 260M1430 590q25 0 20 25-15 10-20-10M1460 600q-30 40-40 60"/>
                            <path class="rail" d="M1420 660L1090 1300"/>
                            <path class="rail pale" d="M1290 900l-100 200-95 195"/>
                            <path class="trail solid" d="M950 820q30 10 60 0l20 15h30v50h-60M965 825v60M1010 820v60M1050 830v50M1008 745v50M760 1015l60 20 15 20M855 1075h20l5 20h40M765 1030l20 70 35 30 15 30 40 20M1245 840l15-25v30M1375 900v40l30 10M1400 890l-40 100-140 170q-40 60-55 130M1450 760q-20 100-45 180M1205 1090l45 15M1215 980l30-10M1380 960l-40 50M305 1220q30-30 40 20-20 0-20-20M1280 1240q10-50 25-10l-5 20M685 1180v20"/>
                        </g>

                        <!-- Highway shields -->
                        <g class="shields">
                            <circle cx="1207" cy="54" r="8"/><text x="1207" y="58">85</text>
                            <circle cx="1337" cy="227" r="8"/><text x="1337" y="231">85</text>
                            <circle cx="1477" cy="397" r="8"/><text x="1477" y="401">85</text>
                            <circle cx="2335" cy="187" r="8"/><text x="2335" y="191">17</text>
                        </g>

                        <!-- Street names -->
                        <g class="streets">
                            <path id="canyon-north" fill="none" d="M693 144l11-24q5-15 16-22 20-8 22-40"/>
                            <path id="canyon-south" fill="none" d="M668 246q6 30 18 54l30 60"/>
                            <path id="expressway" fill="none" d="M2071 320q0 40 20 60l40 36"/>
                            <text class="trail-name"><textPath href="#canyon-north">Stevens Canyon Rd</textPath></text>
                            <text class="trail-name"><textPath href="#canyon-south">Stevens Canyon Rd</textPath></text>
                            <text class="trail-name" transform="translate(1135 102) rotate(89)">S Stelling Rd</text>
                            <text transform="translate(1266 106) rotate(-8)">Rainbow Dr</text>
                            <text transform="translate(1341 102) rotate(90)">S Blaney Ave</text>
                            <text transform="translate(1442 83) rotate(90)">Miller Ave</text>
                            <text transform="translate(1548 109) rotate(-77)">Johnson Ave</text>
                            <text transform="translate(1457 208) rotate(2)">Prospect Rd</text>
                            <text x="1255" y="357">Cox Ave</text>
                            <text x="1641" y="397">Cox Ave</text>
                            <text x="1696" y="357">Bucknall Rd</text>
                            <text transform="translate(1640 325) rotate(-50)">Saratoga Ave</text>
                            <text transform="translate(1796 147) rotate(-48)">Saratoga Ave</text>
                            <text class="highway-name" transform="translate(1694 318) rotate(-90)">Quito Rd</text>
                            <text x="1848" y="100">Payne Ave</text>
                            <text transform="translate(2049 94) rotate(-3)">Payne Ave</text>
                            <text transform="translate(1807 215) rotate(-15)">Hamilton Ave</text>
                            <text x="2090" y="198">W Hamilton Ave</text>
                            <text x="2246" y="198">E Hamilton Ave</text>
                            <text transform="translate(1903 317) rotate(-2)">Campbell Ave</text>
                            <text x="2091" y="303">Campbell Ave</text>
                            <text class="highway-name" transform="translate(2076 201) rotate(89)">San Tomas Expy</text>
                            <text class="highway-name"><textPath href="#expressway">San Tomas Expy</textPath></text>
                            <text transform="translate(2126 399) rotate(-5)">Budd Ave</text>
                            <text transform="translate(1891 382) rotate(88)">Fenian Dr</text>
                            <text transform="translate(2210 431) rotate(-90)">r Blvd</text>
                            <text transform="translate(1250 431) rotate(-90)">S</text>
                        </g>

                        <!-- Neighborhoods -->
                        <g class="neighborhoods">
                            <text x="1606" y="65">LYNBROOK</text>
                            <text x="1657" y="85">WEST SAN JOSE</text>
                            <text x="1723" y="109">COUNTRY LANE</text>
                            <text x="1425" y="152">RAINBOW</text>
                            <text x="1268" y="161">BROOKVALE</text>
                            <text x="1268" y="174">/ CHANTEL</text>
                            <text x="1615" y="194">SARATOGA CREEK</text>
                            <text x="1326" y="295">BLUE HILLS</text>
                            <text x="1590" y="294">SARATOGA</text>
                            <text x="1590" y="307">WOODS</text>
                            <text x="1524" y="325">BROOKVIEW</text>
                            <text x="1623" y="429">QUITO VILLAGE</text>
                            <text x="1789" y="260">CASTRO</text>
                            <text x="1822" y="177">HATHAWAY</text>
                            <text x="1939" y="151">PAYNES</text>
                            <text x="2062" y="113">MILLIC - PHELPS</text>
                            <text x="2107" y="170">CADILLAC WEST</text>
                            <text x="2226" y="167">DAVID -</text>
                            <text x="2228" y="180">ROSEMARY</text>
                            <text x="1913" y="215">ALBERSTONE</text>
                            <text x="1913" y="228">- BECK</text>
                            <text x="2203" y="262">DOWNTOWN</text>
                            <text x="1954" y="367">SAN TOMAS</text>
                            <text x="1954" y="380">AQUINOS</text>
                            <text x="1805" y="412">BUCKNALL</text>
                            <text x="2219" y="62">CASTLEMONT</text>
                            <text x="2344" y="76">DOWNING</text>
                            <text x="2352" y="89">WHITETHORNE</text>
                            <text x="2376" y="433">BOHNETT</text>
                            <text class="city" x="2204" y="303">Campbell</text>
                        </g>
                    </svg>

                    <div class="marker">
                        39
                        <div class="popup">
                            Live-Demo | 39
                            <button type="button" aria-label="Close"><svg viewBox="0 0 10 10" width="10" height="10"><path d="M1 1l8 8M9 1L1 9"/></svg></button>
                        </div>
                    </div>

                    <div class="map-tabs">
                        <button type="button">
                            <svg viewBox="0 0 14 18" width="12" height="18"><path d="M4 0v8M10 18v-8" stroke-width="1.500"/><path d="M0 6h8l-4 5zM6 12h8l-4-5z" fill="currentColor" stroke="none"/></svg>
                            Org
                        </button>
                        <button type="button" class="active">
                            <svg viewBox="0 0 20 16" width="20" height="16"><path d="M6.500 7.500h-2L.5 15h19l-4-7.500h-2M2.500 11.500h15M5 15l2.500-6M15 15l-2.500-6M10 10v5"/><circle cx="10" cy="3.500" r="2.500"/><path d="M8 5.500l2 4.500 2-4.500"/></svg>
                            Sites
                        </button>
                    </div>
                </div>
            </section>

            <section class="panel actions-panel">
                <div class="actions-header">
                    <h2>LIVE-DEMO</h2>
                    <button type="button" class="download" aria-label="Download"><svg viewBox="0 0 14 15" width="14" height="15"><path d="M5.500 0h3v5.500h3L7 12 2.500 5.500h3zM0 13.500h14V15H0z"/></svg></button>
                </div>

                <div class="cards">
                    <button type="button" class="card active"><svg><use href="#icon-plug"/></svg>AP OFFLINE (2)</button>
                    <button type="button" class="card"><svg><use href="#icon-server"/></svg>ARP FAILURE (3)</button>
                    <button type="button" class="card"><svg><use href="#icon-ap"/></svg>AUTHENTICATION FAILURE (4)</button>
                    <button type="button" class="card"><svg><use href="#icon-port"/></svg>BAD WAN UPLINK (3)</button>
                    <button type="button" class="card"><svg><use href="#icon-bolt"/></svg>COVERAGE HOLE (1)</button>
                    <button type="button" class="card"><svg><use href="#icon-server"/></svg>DHCP FAILURE (5)</button>
                    <button type="button" class="card"><svg><use href="#icon-server"/></svg>DNS FAILURE (3)</button>
                    <button type="button" class="card"><svg><use href="#icon-chip"/></svg>HEALTH CHECK FAILED (1)</button>
                    <button type="button" class="card"><svg><use href="#icon-bolt"/></svg>HIGH CPU (1)</button>
                    <button type="button" class="card"><svg><use href="#icon-bolt"/></svg>INSUFFICIENT CAPACITY (1)</button>
                    <button type="button" class="card"><svg><use href="#icon-cable"/></svg>LAYER 1 BAD CABLE (2)</button>
                    <button type="button" class="card"><svg><use href="#icon-port"/></svg>LOOP DETECTED (1)</button>
                </div>
                <div class="scrollbar"><div class="thumb"></div></div>

                <div class="recommendation">
                    <svg><use href="#icon-plug"/></svg>
                    <div>
                        <h3>RECOMMENDED ACTION</h3>
                        <p>For issues with individual APs, please test the cable/port or perform a factory reset. For issues with the entire switch/site, please check the configuration to reach the Mist cloud.</p>
                    </div>
                </div>

                <div class="details">
                    <table>
                        <colgroup>
                            <col class="col-check">
                            <col class="col-site">
                            <col class="col-aps">
                            <col class="col-details">
                            <col class="col-date">
                            <col class="col-status">
                        </colgroup>
                        <thead>
                            <tr>
                                <th><input type="checkbox" aria-label="Select all"></th>
                                <th>Site</th>
                                <th>APs</th>
                                <th>Details</th>
                                <th><div class="sort">Date <svg viewBox="0 0 9 9" width="9" height="9"><path d="M1 .5L4.500 4 8 .5M1 4.500L4.500 8 8 4.500"/></svg></div></th>
                                <th>Status</th>
                            </tr>
                        </thead>
                        <tbody>
                            <tr>
                                <td><input type="checkbox" aria-label="Select row"></td>
                                <td><a class="site-link" href="#">Live-Demo</a></td>
                                <td>2 APs</td>
                                <td>No Ip Address. <a class="more" href="#">View More</a></td>
                                <td>May 12, 2023 09:07 PM</td>
                                <td><div class="status"><select aria-label="Status"><option>Open</option></select></div></td>
                            </tr>
                            <tr>
                                <td><input type="checkbox" aria-label="Select row"></td>
                                <td><a class="site-link" href="#">Live-Demo</a></td>
                                <td>2 APs</td>
                                <td>Switch ld-cup-idf-a-sw2 down. <a class="more" href="#">View More</a></td>
                                <td>May 12, 2023 06:49 AM</td>
                                <td><div class="status"><select aria-label="Status"><option>Open</option></select></div></td>
                            </tr>
                        </tbody>
                    </table>
                </div>
            </section>
        </main>

        <aside class="side-rail">
            <button type="button" class="collapse-button rail-toggle" aria-label="Expand panel"><svg><use href="#icon-chevron"/></svg></button>
        </aside>
    </div>
</body>
</html>
```

FILE: styles.css
```css
* {
    box-sizing: border-box;
}

body {
    margin: 0;
    min-height: 100vh;
    display: flex;
    flex-direction: column;
    background-color: #f7f7f7;
    color: #404042;
    font-family: 'Open Sans', sans-serif;
    font-size: 12px;
}

h1, h2, h3, p, ul {
    margin: 0;
    padding: 0;
}

a {
    color: #0a6ab5;
    text-decoration: none;
}

button, select {
    font-family: inherit;
    cursor: pointer;
}

svg {
    fill: none;
    stroke: currentColor;
}

.icon-defs {
    position: absolute;
    width: 0;
    height: 0;
}

/* Header */
.page-header {
    height: 51px;
    padding: 0 13px 0 15px;
    display: flex;
    justify-content: space-between;
    align-items: center;
}

.page-header h1 {
    padding-top: 2px;
    color: #0085d9;
    font-size: 29px;
    font-weight: 300;
    line-height: 40px;
    letter-spacing: 3px;
}

.ask-button {
    height: 28px;
    margin-bottom: 3px;
    padding: 0 11px;
    display: flex;
    align-items: center;
    gap: 5px;
    background-color: #484d50;
    color: #fff;
    border: none;
    border-radius: 2px;
    font-size: 12px;
    font-weight: 500;
}

/* Layout */
.layout {
    flex: 1;
    display: flex;
    gap: 12px;
    padding: 0 7px 0 15px;
}

.content {
    flex: 1;
    min-width: 0;
    display: flex;
    flex-direction: column;
    gap: 12px;
    padding-bottom: 27px;
}

.panel {
    background-color: #fff;
    border-radius: 2px;
    box-shadow: 0 1px 4px rgba(0, 0, 0, 0.2);
}

.side-rail {
    position: relative;
    width: 24px;
    background-color: #fff;
    box-shadow: 0 1px 4px rgba(0, 0, 0, 0.15);
}

.collapse-button {
    position: absolute;
    z-index: 2;
    width: 24px;
    height: 24px;
    padding: 0;
    display: flex;
    justify-content: center;
    align-items: center;
    background-color: #fff;
    color: #404042;
    border: 1px solid #bbb;
    border-radius: 50%;
}

.collapse-button svg {
    width: 10px;
    height: 12px;
    stroke-width: 2;
}

.sidebar-toggle {
    top: 7px;
    right: -12px;
}

.rail-toggle {
    top: 12px;
    left: -11px;
}

/* Worst sites */
.site-panel {
    display: flex;
    height: 380px;
}

.worst-sites {
    position: relative;
    width: 240px;
    padding: 11px 6px 27px 8px;
    display: flex;
    flex-direction: column;
}

.worst-sites h2 {
    padding-left: 4px;
    font-size: 11px;
    font-weight: 700;
    line-height: 18px;
}

.worst-sites ul {
    margin: 18px 0 0 4px;
    display: flex;
    flex-direction: column;
    gap: 9px;
    list-style: none;
}

.site {
    height: 22px;
    padding-left: 3px;
    display: flex;
    align-items: center;
    gap: 9px;
    background-color: #f2f2f2;
    border-radius: 14px 2px 2px 14px;
}

.count {
    width: 22px;
    height: 22px;
    display: flex;
    justify-content: center;
    align-items: center;
    background-color: #8f8f8f;
    color: #fff;
    border-radius: 50%;
    box-shadow: 0 0 0 3px #f2f2f2;
    font-size: 11px;
    font-weight: 700;
}

.site.selected {
    background-color: #d6d7f4;
}

.selected .count {
    background-color: #0b12bb;
    box-shadow: 0 0 0 3px #d6d7f4;
}

.zoom-links {
    margin-top: auto;
    display: flex;
    gap: 12px;
    font-weight: 500;
    line-height: 18px;
}

/* Map */
.map {
    position: relative;
    flex: 1;
    min-width: 0;
    overflow: hidden;
    background-color: #e6e8ea;
}

.map-canvas {
    display: block;
    width: 100%;
    height: 100%;
    stroke: none;
    font-family: Roboto, sans-serif;
}

.map-canvas path {
    vector-effect: non-scaling-stroke;
    stroke-linejoin: round;
}

.park {
    fill: #bcd4c5;
}

.water {
    fill: #a8bce0;
}

.downtown {
    fill: #f4f1e3;
}

.creek {
    stroke: #a8bce0;
    stroke-width: 1;
}

.road {
    stroke: #fff;
    stroke-width: 1.5;
}

.road.thin {
    stroke: #f6f7f8;
    stroke-width: 1;
}

.road.mid {
    stroke-width: 2;
}

.road.major {
    stroke-width: 4;
}

.road.wide {
    stroke-width: 5;
}

.highway-edge {
    stroke: #b3b0a8;
    stroke-width: 7;
}

.highway {
    stroke: #dedcd6;
    stroke-width: 5;
}

.highway-line {
    stroke: #b3b0a8;
    stroke-width: 1;
}

.trail {
    stroke: #6fa582;
    stroke-width: 1;
    stroke-dasharray: 4 2;
}

.trail.dark {
    stroke: #8a8d8f;
}

.trail.solid {
    stroke: #8fb99e;
    stroke-dasharray: none;
}

.rail {
    stroke: #c4c6c8;
    stroke-width: 1;
}

.rail.pale {
    stroke: #d6d8da;
    stroke-width: 3;
}

.map-canvas text {
    stroke: #f4f5f6;
    stroke-width: 3px;
    stroke-linejoin: round;
    paint-order: stroke;
}

.shields circle {
    fill: #fff;
    stroke: #a9a9a9;
}

.map-canvas .shields text {
    fill: #777;
    stroke: none;
    font-size: 10px;
    text-anchor: middle;
}

.streets text {
    fill: #4e4e4e;
    font-size: 10px;
}

.streets .trail-name {
    fill: #3c6450;
    font-size: 11px;
}

.streets .highway-name {
    fill: #7d7b76;
    font-size: 12px;
}

.neighborhoods text {
    fill: #46484b;
    font-size: 12px;
    font-weight: 500;
    letter-spacing: 2px;
    text-anchor: middle;
}

.neighborhoods .city {
    fill: #1c1c1c;
    font-size: 16px;
    font-weight: 400;
    letter-spacing: 0;
}

.marker {
    position: absolute;
    top: 113px;
    left: calc(50% - 82px);
    width: 20px;
    height: 20px;
    background-color: #0b12bb;
    color: #fff;
    border-radius: 50%;
    font-family: Roboto, sans-serif;
    font-size: 13px;
    line-height: 20px;
    text-align: center;
}

.popup {
    position: absolute;
    bottom: 32px;
    left: -44px;
    width: 108px;
    height: 41px;
    padding-left: 12px;
    background-color: #fff;
    color: #333;
    border-radius: 8px;
    box-shadow: 0 2px 7px 1px rgba(0, 0, 0, 0.3);
    line-height: 41px;
    text-align: left;
    white-space: nowrap;
}

.popup::after {
    content: '';
    position: absolute;
    top: 100%;
    left: 43px;
    border: 11px solid transparent;
    border-top-color: #fff;
    border-bottom: none;
}

.popup button {
    position: absolute;
    top: 4px;
    right: 4px;
    width: 10px;
    height: 10px;
    padding: 0;
    background: none;
    border: none;
    color: #333;
}

.popup svg {
    display: block;
}

.map-tabs {
    position: absolute;
    top: 6px;
    right: 6px;
    width: 131px;
    height: 41px;
    padding: 0 6px 6px 18px;
    display: flex;
    justify-content: space-between;
    background-color: rgba(255, 255, 255, 0.75);
}

.map-tabs button {
    padding: 2px 0 0;
    display: flex;
    align-items: center;
    gap: 8px;
    background: none;
    border: none;
    border-bottom: 2px solid transparent;
    color: #0a6ab5;
    font-size: 12px;
    font-weight: 500;
}

.map-tabs .active {
    padding: 2px 4px 0;
    gap: 4px;
    color: #55a8e8;
    border-bottom-color: #55a8e8;
}

/* Actions */
.actions-panel {
    padding: 12px;
}

.actions-header {
    height: 27px;
    display: flex;
    justify-content: space-between;
    align-items: center;
}

.actions-header h2 {
    font-size: 18px;
    font-weight: 600;
    line-height: 24px;
}

.download {
    margin-right: 3px;
    padding: 0;
    background: none;
    border: none;
    color: #404042;
}

.download svg {
    display: block;
    fill: currentColor;
    stroke: none;
}

.cards {
    display: flex;
    gap: 24px;
    padding: 12px 30px;
    overflow: hidden;
    background-color: #f2f2f2;
}

.card {
    flex: 0 0 170px;
    height: 110px;
    padding: 12px 10px 0;
    display: flex;
    flex-direction: column;
    align-items: center;
    gap: 7px;
    background-color: #fff;
    color: #757575;
    border: none;
    box-shadow: 0 1px 4px rgba(0, 0, 0, 0.2);
    font-size: 13px;
    line-height: 19px;
}

.card svg {
    flex: none;
    width: 50px;
    height: 50px;
    color: #aed8f8;
}

.card.active {
    color: #404042;
    font-weight: 600;
}

.card.active svg {
    color: #5fb1ec;
}

.scrollbar {
    height: 15px;
    padding: 3px 1px;
    background-color: #fafafa;
    border-top: 1px solid #e4e4e4;
    border-bottom: 1px solid #e4e4e4;
}

.thumb {
    width: 70%;
    height: 8px;
    background-color: #b9b9b9;
    border-radius: 4px;
}

.recommendation {
    height: 96px;
    margin-top: 4px;
    padding: 0 18px;
    display: flex;
    align-items: center;
    gap: 18px;
    border: 1px solid #c9cbcc;
}

.recommendation svg {
    width: 50px;
    height: 50px;
    color: #5fb1ec;
}

.recommendation h3 {
    font-size: 11px;
    font-weight: 600;
    line-height: 20px;
}

.recommendation p {
    line-height: 22px;
}

.details {
    padding: 17px 12px 13px;
    border: 1px solid #c8d3da;
    border-top: none;
}

table {
    width: 100%;
    table-layout: fixed;
    border-collapse: collapse;
}

.col-check {
    width: 96px;
}

.col-site {
    width: 266px;
}

.col-aps {
    width: 156px;
}

.col-date {
    width: 527px;
}

.col-status {
    width: 341px;
}

th, td {
    padding: 0;
    text-align: left;
}

th {
    height: 28px;
    font-size: 11px;
    font-weight: 700;
}

td {
    height: 36px;
    border-bottom: 1px solid #dcdcdc;
    color: #505052;
    font-size: 13px;
}

input[type="checkbox"] {
    appearance: none;
    display: block;
    width: 14px;
    height: 14px;
    margin: 0 0 0 6px;
    background-color: #fff;
    border: 2px solid #7f7f8c;
    border-radius: 2px;
}

.sort {
    display: flex;
    justify-content: space-between;
    align-items: center;
    padding-right: 9px;
}

.site-link {
    color: #6259c4;
}

.more {
    margin-left: 4px;
    font-weight: 500;
}

.status {
    position: relative;
    width: 60px;
}

.status select {
    appearance: none;
    display: block;
    width: 100%;
    height: 24px;
    padding: 0 0 0 9px;
    background-color: #e0e0e0;
    color: #404042;
    border: 1px solid #c6c6c6;
    border-radius: 2px;
    font-size: 13px;
}

.status::after {
    content: '';
    position: absolute;
    top: 10px;
    right: 7px;
    border: 4px solid transparent;
    border-top: 5px solid #404042;
    border-bottom: none;
    pointer-events: none;
}
```
